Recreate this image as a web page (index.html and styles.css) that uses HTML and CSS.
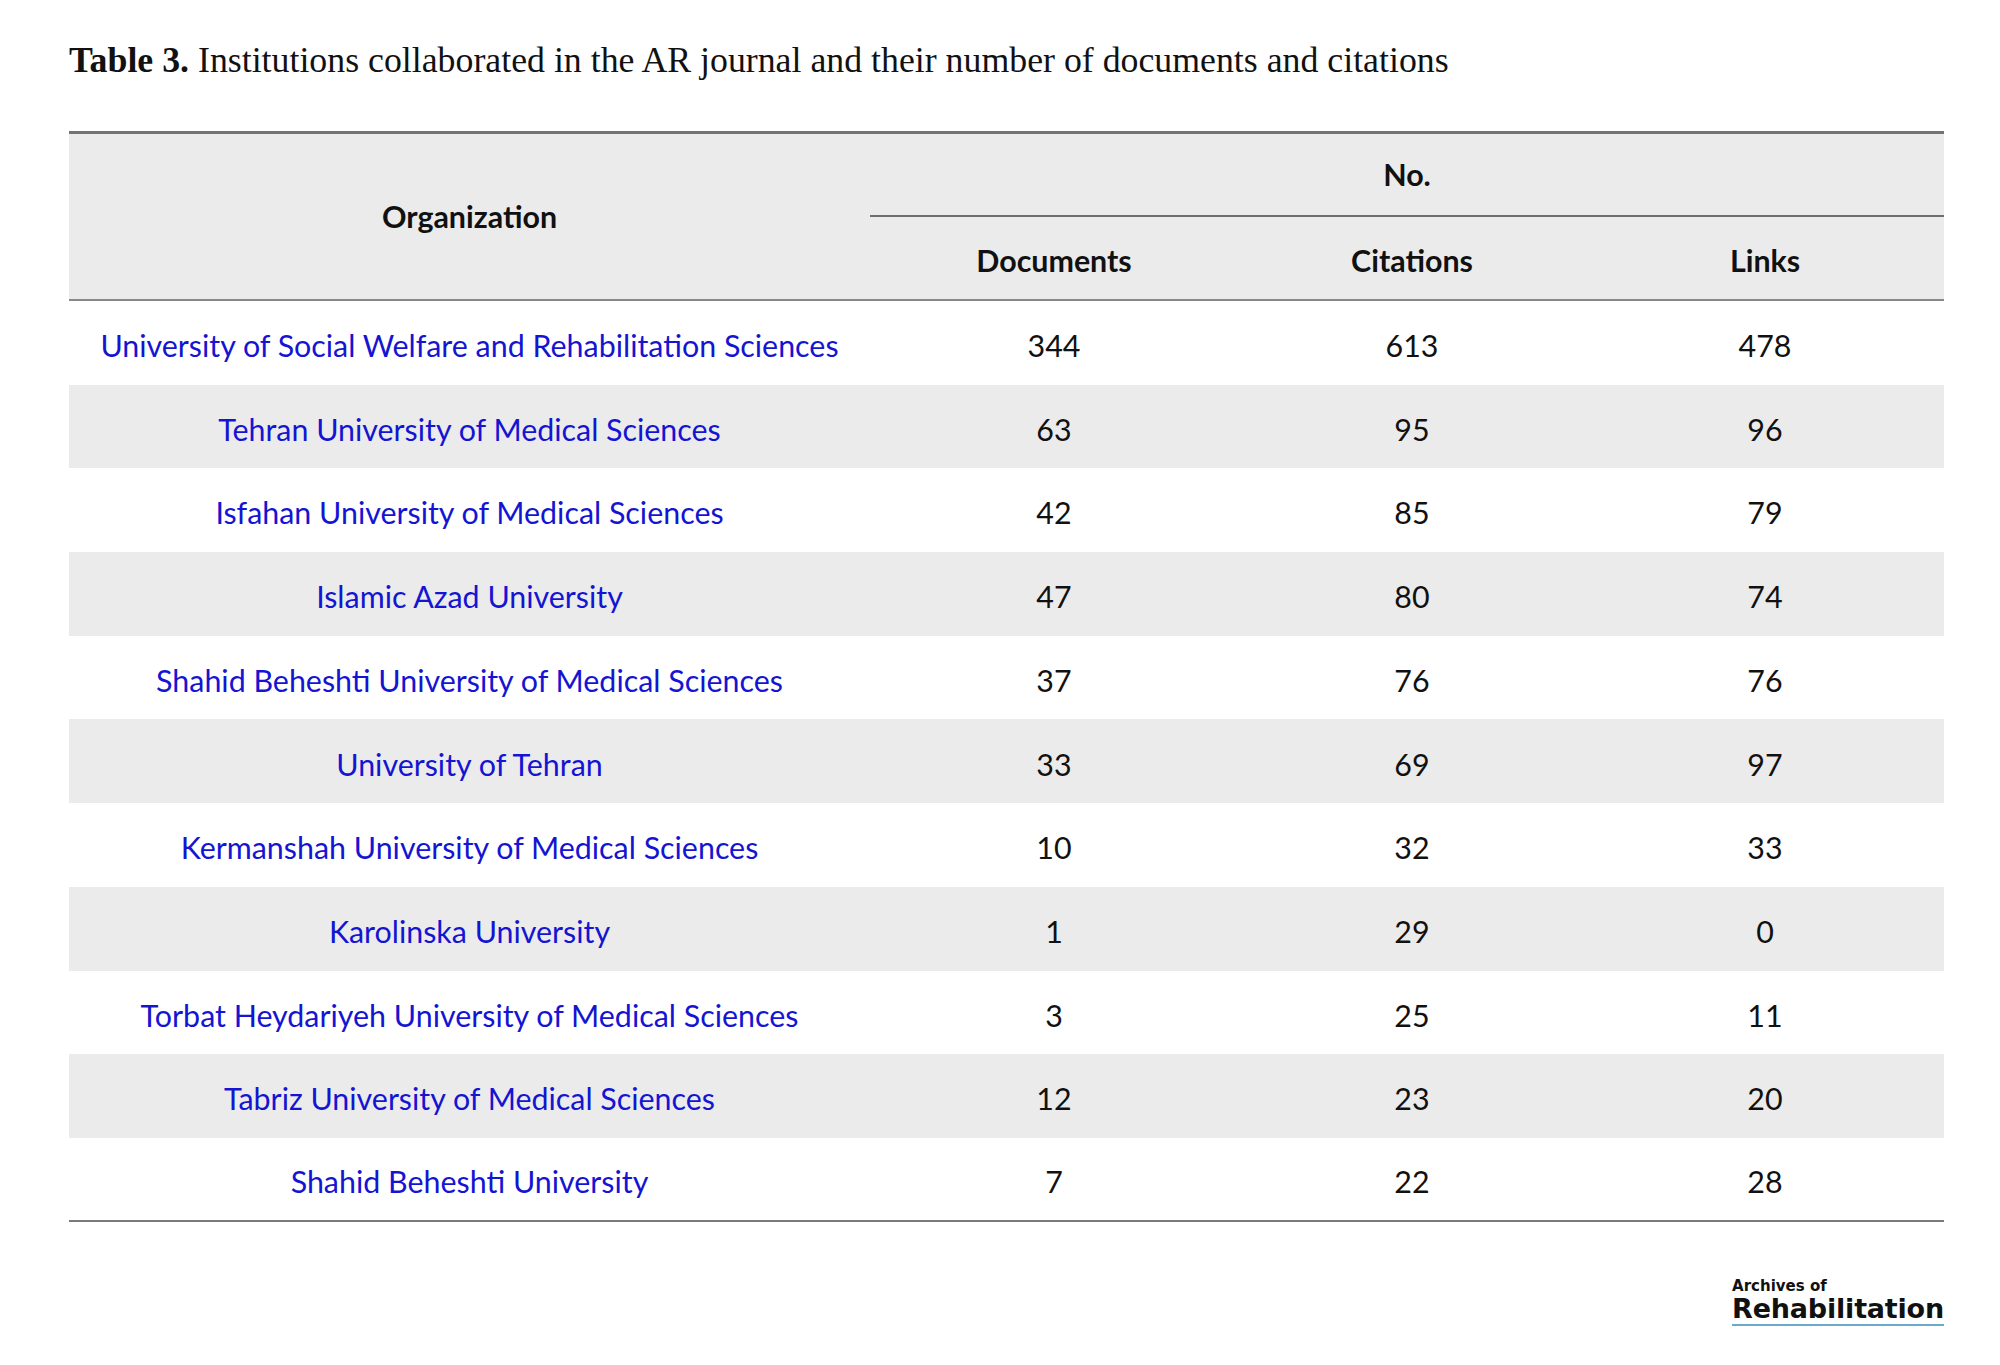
FILE: index.html
```html
<!DOCTYPE html>
<html lang="en">
<head>
<meta charset="utf-8">
<title>Table 3</title>
<link rel="stylesheet" href="styles.css">
</head>
<body>
<main class="page">
  <h1 class="caption"><b>Table 3.</b> Institutions collaborated in the AR journal and their number of documents and citations</h1>
  <table class="data">
    <colgroup>
      <col class="c-org"><col class="c-doc"><col class="c-cit"><col class="c-lnk">
    </colgroup>
    <thead>
      <tr class="h1">
        <th rowspan="2" class="org-h">Organization</th>
        <th colspan="3" class="no-h">No.</th>
      </tr>
      <tr class="h2">
        <th>Documents</th>
        <th>Citations</th>
        <th>Links</th>
      </tr>
    </thead>
    <tbody>
      <tr><td class="org">University of Social Welfare and Rehabilitation Sciences</td><td>344</td><td>613</td><td>478</td></tr>
      <tr><td class="org">Tehran University of Medical Sciences</td><td>63</td><td>95</td><td>96</td></tr>
      <tr><td class="org">Isfahan University of Medical Sciences</td><td>42</td><td>85</td><td>79</td></tr>
      <tr><td class="org">Islamic Azad University</td><td>47</td><td>80</td><td>74</td></tr>
      <tr><td class="org">Shahid Beheshti University of Medical Sciences</td><td>37</td><td>76</td><td>76</td></tr>
      <tr><td class="org">University of Tehran</td><td>33</td><td>69</td><td>97</td></tr>
      <tr><td class="org">Kermanshah University of Medical Sciences</td><td>10</td><td>32</td><td>33</td></tr>
      <tr><td class="org">Karolinska University</td><td>1</td><td>29</td><td>0</td></tr>
      <tr><td class="org">Torbat Heydariyeh University of Medical Sciences</td><td>3</td><td>25</td><td>11</td></tr>
      <tr><td class="org">Tabriz University of Medical Sciences</td><td>12</td><td>23</td><td>20</td></tr>
      <tr><td class="org">Shahid Beheshti University</td><td>7</td><td>22</td><td>28</td></tr>
    </tbody>
  </table>
  <div class="logo-row">
    <div class="logo">
      <span class="logo-small">Archives of</span>
      <span class="logo-big">Rehabilitation</span>
    </div>
  </div>
</main>
</body>
</html>
```
FILE: styles.css
```css
html, body {
  margin: 0;
  padding: 0;
  background: #ffffff;
}

.page {
  width: 1875px;
  padding: 40px 0 0 69px;
}

.caption {
  margin: 0;
  font-family: "Liberation Serif", "Times New Roman", serif;
  font-weight: normal;
  font-size: 35.8px;
  line-height: 41px;
  color: #111;
}

.caption b {
  font-weight: bold;
}

.data {
  margin-top: 50px;
  width: 1875px;
  border-collapse: separate;
  border-spacing: 0;
  table-layout: fixed;
  font-family: Lato, "Noto Sans", sans-serif;
  font-size: 30.4px;
  color: #111;
}

.c-org { width: 801px; }
.c-doc { width: 368px; }
.c-cit { width: 348px; }
.c-lnk { width: 358px; }

.data th,
.data td {
  box-sizing: border-box;
  padding: 0;
  text-align: center;
  vertical-align: middle;
  line-height: 1.2;
}

.data thead th {
  background: #ebebeb;
  font-weight: bold;
}

.h1 th {
  border-top: 3px solid #737373;
}

.org-h {
  border-bottom: 2px solid #888;
  padding-top: 6px;
}

.no-h {
  height: 86px;
  border-bottom: 2px solid #6e6e6e;
  padding-top: 4px;
}

.h2 th {
  height: 84px;
  border-bottom: 2px solid #888;
  padding-top: 4px;
}

.data tbody td {
  height: 83.7px;
  padding-top: 5px;
}

.data tbody tr:nth-child(even) td {
  background: #ebebeb;
}

.data tbody tr:last-child td {
  border-bottom: 2px solid #7a7a7a;
}

.data td.org {
  color: #1414d2;
}

.logo-row {
  display: flex;
  justify-content: flex-end;
  padding-top: 56px;
}

.logo {
  display: flex;
  flex-direction: column;
  align-items: flex-start;
  font-family: "DejaVu Sans", Verdana, sans-serif;
  font-weight: bold;
  color: #111;
}

.logo-small {
  font-size: 15px;
  line-height: 17px;
}

.logo-big {
  font-size: 27px;
  line-height: 28px;
  letter-spacing: -0.2px;
  border-bottom: 2px solid #6aa8cc;
  padding-bottom: 1px;
}
```
